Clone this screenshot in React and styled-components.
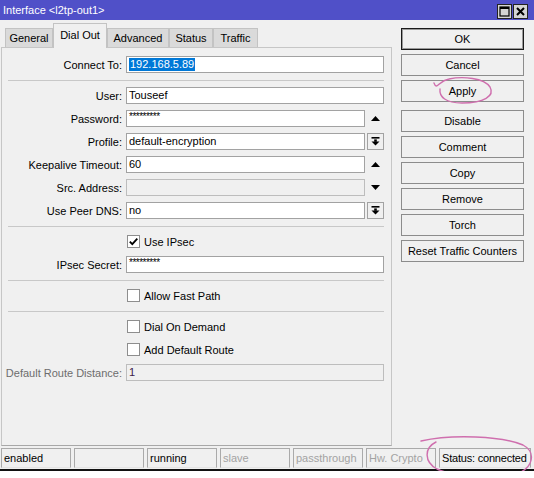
import React from 'react'
import styled, { createGlobalStyle } from 'styled-components'

const GlobalStyle = createGlobalStyle`
  html, body {
    margin: 0;
    padding: 0;
    background: #fff;
  }
  body {
    font-family: "Liberation Sans", Arial, sans-serif;
    font-size: 11px;
    color: #000;
  }
  * {
    box-sizing: border-box;
  }
`

function UpArrow() {
  return (
    <svg width="9" height="5" viewBox="0 0 9 5">
      <path d="M0 5 L4.5 0 L9 5 Z" fill="#000" />
    </svg>
  )
}

function DownArrow() {
  return (
    <svg width="9" height="5" viewBox="0 0 9 5">
      <path d="M0 0 L9 0 L4.5 5 Z" fill="#000" />
    </svg>
  )
}

function DropIcon() {
  return (
    <svg width="9" height="9" viewBox="0 0 9 9">
      <rect x="0.5" y="0" width="8" height="1.6" fill="#000" />
      <rect x="3.2" y="2.4" width="2.6" height="2.4" fill="#000" />
      <path d="M0.5 4.4 L8.5 4.4 L4.5 8.6 Z" fill="#000" />
    </svg>
  )
}

function Check() {
  return (
    <svg width="11" height="11" viewBox="0 0 11 11">
      <path d="M1.8 5.6 L4.3 8.2 L9.3 2.6" fill="none" stroke="#000" strokeWidth="1.8" />
    </svg>
  )
}

function Field({ label, value, disabled, greyLabel, selected, side }) {
  return (
    <Row>
      <Label $grey={greyLabel}>{label}</Label>
      <Input $disabled={disabled}>
        {selected ? <Selection>{value}</Selection> : value}
      </Input>
      {side === 'up' && <Side><UpArrow /></Side>}
      {side === 'down' && <Side><DownArrow /></Side>}
      {side === 'drop' && <DropButton><DropIcon /></DropButton>}
    </Row>
  )
}

function CheckItem({ label, checked }) {
  return (
    <CheckRow>
      <Box>{checked && <Check />}</Box>
      <span>{label}</span>
    </CheckRow>
  )
}

const tabs = [
  { name: 'General', w: 48 },
  { name: 'Dial Out', w: 54, active: true },
  { name: 'Advanced', w: 62 },
  { name: 'Status', w: 44 },
  { name: 'Traffic', w: 45 },
]

const actions = ['OK', 'Cancel', 'Apply', 'Disable', 'Comment', 'Copy', 'Remove', 'Torch', 'Reset Traffic Counters']

const flags = [
  { text: 'enabled' },
  { text: '' },
  { text: 'running' },
  { text: 'slave', dim: true },
  { text: 'passthrough', dim: true },
  { text: 'Hw. Crypto', dim: true },
  { text: 'Status: connected', wide: true },
]

export default function App() {
  return (
    <>
      <GlobalStyle />
      <Window>
        <TitleBar>
          <span>Interface &lt;l2tp-out1&gt;</span>
          <WinButtons>
            <WinButton>
              <svg width="11" height="11" viewBox="0 0 11 11">
                <rect x="1" y="1" width="9" height="9" fill="none" stroke="#000" strokeWidth="1.2" />
                <rect x="1" y="1" width="9" height="2" fill="#000" />
              </svg>
            </WinButton>
            <WinButton>
              <svg width="11" height="11" viewBox="0 0 11 11">
                <path d="M2 2 L9 9 M9 2 L2 9" stroke="#000" strokeWidth="2" />
              </svg>
            </WinButton>
          </WinButtons>
        </TitleBar>

        <Body>
          <LeftPane>
            <TabStrip>
              {tabs.map(t => (
                <Tab key={t.name} $active={t.active} $w={t.w}>{t.name}</Tab>
              ))}
            </TabStrip>
            <Panel>
              <Field label="Connect To:" value="192.168.5.89" selected />
              <Separator />
              <Field label="User:" value="Touseef" />
              <Field label="Password:" value={<Stars>*********</Stars>} side="up" />
              <Field label="Profile:" value="default-encryption" side="drop" />
              <Field label="Keepalive Timeout:" value="60" side="up" />
              <Field label="Src. Address:" value="" disabled side="down" />
              <Field label="Use Peer DNS:" value="no" side="drop" />
              <Separator />
              <CheckItem label="Use IPsec" checked />
              <Field label="IPsec Secret:" value={<Stars>*********</Stars>} />
              <Separator />
              <CheckItem label="Allow Fast Path" />
              <Separator />
              <CheckItem label="Dial On Demand" />
              <CheckItem label="Add Default Route" />
              <Field label="Default Route Distance:" value={<Dimmed>1</Dimmed>} disabled greyLabel />
            </Panel>
          </LeftPane>

          <ButtonColumn>
            {actions.map(a => (
              <Button key={a} $primary={a === 'OK'} $space={a === 'Disable'}>{a}</Button>
            ))}
          </ButtonColumn>
        </Body>

        <StatusBar>
          {flags.map((f, i) => (
            <StatusCell key={i} $dim={f.dim} $wide={f.wide}>{f.text}</StatusCell>
          ))}
        </StatusBar>

        <Marks width="534" height="478" viewBox="0 0 534 478">
          <path
            d="M434 83 C 437 91, 438 81, 449 79 C 463 76, 484 78, 490 87 C 495 96, 484 103, 462 103 C 446 103, 439 97, 440 89"
            fill="none" stroke="#cf6fae" strokeWidth="1.4" strokeLinecap="round"
          />
          <path
            d="M421 441 C 452 434, 502 436, 523 445 C 536 452, 534 468, 516 474 C 496 479, 455 477, 437 469 C 424 462, 424 448, 436 442"
            fill="none" stroke="#cf6fae" strokeWidth="1.4" strokeLinecap="round"
          />
        </Marks>
      </Window>
    </>
  )
}

const Window = styled.div`
  position: relative;
  width: 534px;
  height: 471px;
  display: flex;
  flex-direction: column;
  background: #f0f0f0;
  border-bottom: 2px solid #111;
`

const TitleBar = styled.div`
  height: 20px;
  flex: none;
  background: #5050c8;
  color: #fff;
  display: flex;
  align-items: center;
  justify-content: space-between;
  padding: 0 6px 0 3px;
  font-size: 11px;
`

const WinButtons = styled.div`
  display: flex;
  gap: 1px;
  margin-top: 3px;
`

const WinButton = styled.div`
  width: 15px;
  height: 15px;
  background: #d4d4d4;
  border: 1px solid #222;
  display: flex;
  align-items: center;
  justify-content: center;
`

const Body = styled.div`
  flex: 1;
  display: flex;
  min-height: 0;
`

const LeftPane = styled.div`
  width: 392px;
  padding: 3px 0 1px 1px;
  display: flex;
  flex-direction: column;
`

const TabStrip = styled.div`
  height: 24px;
  display: flex;
  align-items: flex-end;
  padding-left: 4px;
`

const Tab = styled.div`
  position: relative;
  z-index: 1;
  width: ${p => p.$w}px;
  height: ${p => (p.$active ? 25 : 19)}px;
  margin-bottom: ${p => (p.$active ? -1 : 0)}px;
  padding-bottom: ${p => (p.$active ? 2 : 0)}px;
  background: ${p => (p.$active ? '#f0f0f0' : '#dadada')};
  border: 1px solid #c3c3c3;
  border-bottom: none;
  display: flex;
  align-items: center;
  justify-content: center;
`

const Panel = styled.div`
  flex: 1;
  border: 1px solid #c6c6c6;
  border-bottom-color: #a8a8a8;
  background: #f0f0f0;
  padding: 8px 7px 0 0;
  display: flex;
  flex-direction: column;
  gap: 6px;
`

const Row = styled.div`
  height: 17px;
  display: flex;
  align-items: center;
`

const Label = styled.div`
  width: 120px;
  flex: none;
  text-align: right;
  color: ${p => (p.$grey ? '#6d6d6d' : '#000')};
  white-space: nowrap;
`

const Input = styled.div`
  flex: 1;
  height: 17px;
  margin-left: 4px;
  padding: 0 2px;
  border: 1px solid ${p => (p.$disabled ? '#bdbdbd' : '#a2a2a2')};
  background: ${p => (p.$disabled ? '#f0f0f0' : '#fff')};
  line-height: 15px;
  white-space: nowrap;
  overflow: hidden;
`

const Selection = styled.span`
  background: #0078d7;
  color: #fff;
  padding: 0 1px;
  display: inline-block;
  height: 13px;
  line-height: 13px;
`

const Stars = styled.span`
  font-size: 10px;
  letter-spacing: -0.5px;
  position: relative;
  top: -2px;
`

const Dimmed = styled.span`
  color: #3c1a4a;
`

const Side = styled.div`
  width: 17px;
  height: 17px;
  margin-left: 2px;
  flex: none;
  display: flex;
  align-items: center;
  justify-content: center;
`

const DropButton = styled(Side)`
  border: 1px solid #a2a2a2;
  background: #f0f0f0;
`

const Separator = styled.div`
  height: 1px;
  margin: 1px 0 0 6px;
  background: #c8c8c8;
`

const CheckRow = styled.div`
  height: 17px;
  display: flex;
  align-items: center;
  gap: 4px;
  padding-left: 125px;
`

const Box = styled.div`
  width: 13px;
  height: 13px;
  border: 1px solid #8e8e8e;
  background: #fff;
  display: flex;
  align-items: center;
  justify-content: center;
`

const ButtonColumn = styled.div`
  padding: 8px 0 0 9px;
  display: flex;
  flex-direction: column;
  gap: 4px;
`

const Button = styled.div`
  width: 123px;
  height: 22px;
  margin-top: ${p => (p.$space ? 4 : 0)}px;
  border: 1px solid ${p => (p.$primary ? '#1a1a1a' : '#8c8c8c')};
  box-shadow: ${p => (p.$primary ? 'inset 0 0 0 1px #9a9a9a' : 'none')};
  background: #f0f0f0;
  display: flex;
  align-items: center;
  justify-content: center;
`

const StatusBar = styled.div`
  height: 22px;
  flex: none;
  display: flex;
  gap: 3px;
  padding: 1px 0 1px 1px;
`

const StatusCell = styled.div`
  width: ${p => (p.$wide ? 92 : 70)}px;
  height: 20px;
  border: 1px solid #aaaaaa;
  border-bottom-color: #e4e4e4;
  padding-left: 2px;
  display: flex;
  align-items: center;
  color: ${p => (p.$dim ? '#a3a3a3' : '#000')};
  white-space: nowrap;
  overflow: hidden;
  letter-spacing: ${p => (p.$wide ? '-0.2px' : '0')};
`

const Marks = styled.svg`
  position: absolute;
  left: 0;
  top: 0;
  pointer-events: none;
  overflow: visible;
`
